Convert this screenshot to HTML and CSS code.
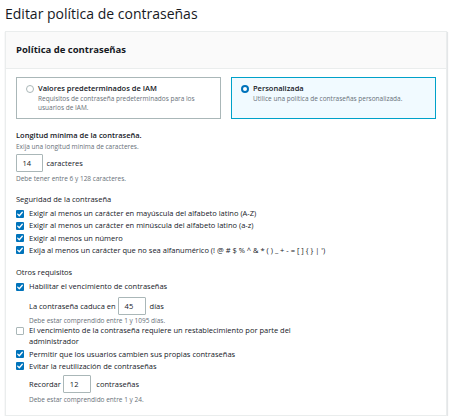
FILE: index.html
```html
<!DOCTYPE html>
<html lang="es">
<head>
<meta charset="utf-8">
<title>Editar política de contraseñas</title>
<link rel="stylesheet" href="styles.css">
</head>
<body>
<h1 class="title">Editar política de contraseñas</h1>
<section class="card">
  <header class="card-header">Política de contraseñas</header>
  <div class="card-body">
    <div class="tiles">
      <div class="tile">
        <span class="radio"></span>
        <div class="tile-text">
          <div class="tile-title">Valores predeterminados de IAM</div>
          <div class="tile-desc">Requisitos de contraseña predeterminados para los usuarios de IAM.</div>
        </div>
      </div>
      <div class="tile tile-selected">
        <span class="radio radio-on"></span>
        <div class="tile-text">
          <div class="tile-title">Personalizada</div>
          <div class="tile-desc">Utilice una política de contraseñas personalizada.</div>
        </div>
      </div>
    </div>

    <div class="label label-strong sec-first">Longitud mínima de la contraseña.</div>
    <div class="desc desc-sub">Exija una longitud mínima de caracteres.</div>
    <div class="inline-row row-len">
      <span class="input w-len">14</span>
      <span class="unit">caracteres</span>
    </div>
    <div class="desc help-len">Debe tener entre 6 y 128 caracteres.</div>

    <div class="label sec">Seguridad de la contraseña</div>
    <div class="checks">
      <div class="check"><span class="box on"><svg viewBox="0 0 8 8" width="8" height="8"><path d="M1.7 4.1 L3.3 5.7 L6.3 2.3" fill="none" stroke="#fff" stroke-width="1.3" stroke-linecap="round" stroke-linejoin="round"/></svg></span><span>Exigir al menos un carácter en mayúscula del alfabeto latino (A-Z)</span></div>
      <div class="check"><span class="box on"><svg viewBox="0 0 8 8" width="8" height="8"><path d="M1.7 4.1 L3.3 5.7 L6.3 2.3" fill="none" stroke="#fff" stroke-width="1.3" stroke-linecap="round" stroke-linejoin="round"/></svg></span><span>Exigir al menos un carácter en minúscula del alfabeto latino (a-z)</span></div>
      <div class="check"><span class="box on"><svg viewBox="0 0 8 8" width="8" height="8"><path d="M1.7 4.1 L3.3 5.7 L6.3 2.3" fill="none" stroke="#fff" stroke-width="1.3" stroke-linecap="round" stroke-linejoin="round"/></svg></span><span>Exigir al menos un número</span></div>
      <div class="check"><span class="box on"><svg viewBox="0 0 8 8" width="8" height="8"><path d="M1.7 4.1 L3.3 5.7 L6.3 2.3" fill="none" stroke="#fff" stroke-width="1.3" stroke-linecap="round" stroke-linejoin="round"/></svg></span><span>Exija al menos un carácter que no sea alfanumérico (! @ # $ % ^ &amp; * ( ) _ + - = [ ] { } | ')</span></div>
    </div>

    <div class="label sec">Otros requisitos</div>
    <div class="checks">
      <div class="check"><span class="box on"><svg viewBox="0 0 8 8" width="8" height="8"><path d="M1.7 4.1 L3.3 5.7 L6.3 2.3" fill="none" stroke="#fff" stroke-width="1.3" stroke-linecap="round" stroke-linejoin="round"/></svg></span><span>Habilitar el vencimiento de contraseñas</span></div>
      <div class="nested">
        <div class="inline-row row-exp">
          <span class="unit-pre">La contraseña caduca en</span>
          <span class="input w-exp">45</span>
          <span class="unit">días</span>
        </div>
        <div class="desc help-exp">Debe estar comprendido entre 1 y 1095 días.</div>
      </div>
      <div class="check check-wrap"><span class="box"></span><span class="wrap-text">El vencimiento de la contraseña requiere un restablecimiento por parte del administrador</span></div>
      <div class="check"><span class="box on"><svg viewBox="0 0 8 8" width="8" height="8"><path d="M1.7 4.1 L3.3 5.7 L6.3 2.3" fill="none" stroke="#fff" stroke-width="1.3" stroke-linecap="round" stroke-linejoin="round"/></svg></span><span>Permitir que los usuarios cambien sus propias contraseñas</span></div>
      <div class="check"><span class="box on"><svg viewBox="0 0 8 8" width="8" height="8"><path d="M1.7 4.1 L3.3 5.7 L6.3 2.3" fill="none" stroke="#fff" stroke-width="1.3" stroke-linecap="round" stroke-linejoin="round"/></svg></span><span>Evitar la reutilización de contraseñas</span></div>
      <div class="nested">
        <div class="inline-row row-reuse">
          <span class="unit-pre">Recordar</span>
          <span class="input w-reuse">12</span>
          <span class="unit unit-wide">contraseñas</span>
        </div>
        <div class="desc help-reuse">Debe estar comprendido entre 1 y 24.</div>
      </div>
    </div>
  </div>
</section>
</body>
</html>
```
FILE: styles.css
```css
* { box-sizing: border-box; }
html, body { margin: 0; padding: 0; background: #ffffff; }
body {
  font-family: "Open Sans", "Noto Sans", sans-serif;
  color: #16191f;
  padding: 0 0 0 5px;
  width: 452px;
}
.title {
  margin: 0;
  padding-top: 4px;
  font-size: 14px;
  line-height: 20px;
  font-weight: 400;
  color: #16191f;
}
.card {
  margin-top: 7px;
  width: 442px;
  border: 1px solid #eaeded;
  box-shadow: 0 1px 1px 0 rgba(0, 28, 36, 0.18), 1px 1px 1px 0 rgba(0, 28, 36, 0.08);
  background: #ffffff;
}
.card-header {
  background: #fafafa;
  border-bottom: 1px solid #eaeded;
  padding: 12px 10px 12px 10px;
  font-size: 9.5px;
  line-height: 12px;
  font-weight: 700;
}
.card-body {
  padding: 8px 10px 10.5px 10px;
  display: flex;
  flex-direction: column;
}
.tiles {
  display: grid;
  grid-template-columns: 205px 205px;
  column-gap: 10px;
}
.tile {
  display: flex;
  align-items: flex-start;
  border: 1px solid #aab7b8;
  padding: 4.5px 8px 6px 9px;
  height: 42px;
}
.tile-selected {
  border-color: #00a1c9;
  background: #f1faff;
}
.radio {
  flex: none;
  width: 8px;
  height: 8px;
  border-radius: 50%;
  border: 1px solid #aab7b8;
  background: #fff;
  margin-top: 2px;
  margin-right: 4px;
}
.radio-on {
  border: 2.5px solid #0073bb;
}
.tile-title {
  font-size: 7.5px;
  line-height: 11px;
  font-weight: 600;
}
.tile-desc {
  font-size: 6.5px;
  line-height: 9px;
  color: #687078;
}
.label {
  font-size: 7.5px;
  line-height: 11px;
  font-weight: 500;
}
.label-strong { font-weight: 600; }
.sec-first { margin-top: 11px; }
.sec { margin-top: 11px; }
.desc {
  font-size: 6.5px;
  line-height: 9px;
  color: #687078;
}
.desc-sub { margin-top: 0.5px; }
.inline-row {
  display: flex;
  align-items: center;
  font-size: 7.5px;
}
.row-len { margin-top: 3px; }
.input {
  display: flex;
  align-items: center;
  height: 18px;
  border: 1px solid #aab7b8;
  border-radius: 1px;
  padding-left: 5.5px;
  font-size: 7.5px;
  background: #fff;
}
.w-len { width: 27px; }
.w-exp { width: 28px; }
.w-reuse { width: 28px; }
.unit { margin-left: 3.5px; }
.unit-wide { margin-left: 5px; }
.unit-pre { margin-right: 2.5px; }
.help-len { margin-top: 2px; }
.checks {
  margin-top: 3.5px;
  display: flex;
  flex-direction: column;
  gap: 1.3px;
}
.check {
  display: flex;
  align-items: flex-start;
  font-size: 7.5px;
  line-height: 11px;
}
.box {
  flex: none;
  width: 8px;
  height: 8px;
  margin-top: 1.5px;
  margin-right: 5px;
  border: 1px solid #aab7b8;
  border-radius: 1px;
  background: #fff;
  display: flex;
}
.box.on {
  border: none;
  background: #0073bb;
}
.wrap-text { max-width: 270px; }
.nested {
  padding-left: 13px;
  display: flex;
  flex-direction: column;
}
.row-exp { margin-top: 3.2px; }
.help-exp { margin-top: 1.5px; margin-bottom: -1.3px; }
.row-reuse { margin-top: 2.2px; }
.help-reuse { margin-top: 2px; }
```
